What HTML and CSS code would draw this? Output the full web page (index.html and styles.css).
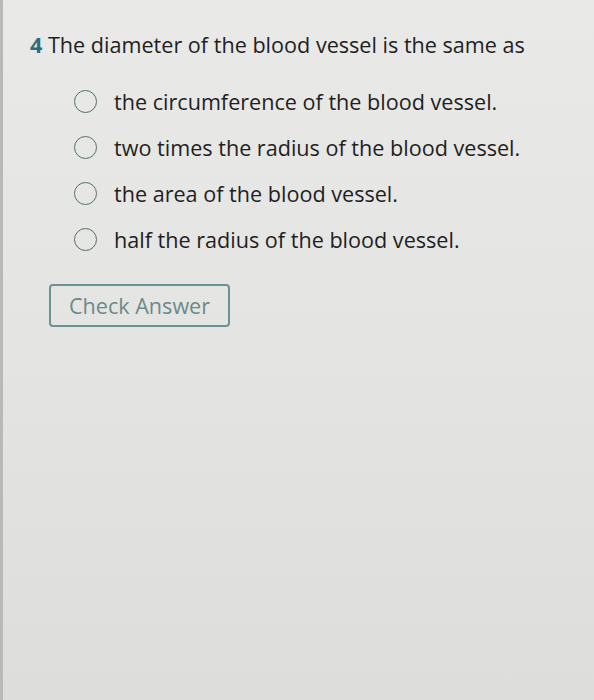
FILE: index.html
```html
<!DOCTYPE html>
<html>
<head>
<meta charset="utf-8">
<link rel="stylesheet" href="styles.css">
</head>
<body>
<main class="page">
  <div class="question">
    <span class="num">4</span> The diameter of the blood vessel is the same as
  </div>
  <ul class="options">
    <li class="option"><span class="radio"></span><span>the circumference of the blood vessel.</span></li>
    <li class="option"><span class="radio"></span><span>two times the radius of the blood vessel.</span></li>
    <li class="option"><span class="radio"></span><span>the area of the blood vessel.</span></li>
    <li class="option"><span class="radio"></span><span>half the radius of the blood vessel.</span></li>
  </ul>
  <button class="check">Check Answer</button>
</main>
</body>
</html>
```
FILE: styles.css
```css
html, body { margin: 0; padding: 0; }
body {
  width: 594px;
  height: 700px;
  overflow: hidden;
  background: linear-gradient(180deg, #e9e9e7 0%, #e4e4e2 50%, #dddddb 100%);
  font-family: "Open Sans", sans-serif;
  color: #1f1f1f;
  border-left: 3px solid #b9b9b7;
  box-sizing: border-box;
}
.page { padding: 30px 0 0 27px; }
.question { font-size: 21.6px; line-height: 30px; }
.num { color: #2f6c7d; font-weight: 700; }
.options { list-style: none; margin: 18px 0 0 0; padding: 0 0 0 44px; }
.option { display: flex; align-items: center; gap: 17px; height: 46px; font-size: 21.6px; }
.radio {
  width: 21px; height: 21px;
  border: 1.5px solid #566c70;
  border-radius: 50%;
  flex: none;
}
.check {
  margin: 22px 0 0 19px;
  width: 181px; height: 43px;
  background: transparent;
  border: 2px solid #6b9396;
  border-radius: 4px;
  font-family: "Open Sans", sans-serif;
  font-size: 21.6px;
  color: #6b8a8c;
  padding: 0;
}
```
